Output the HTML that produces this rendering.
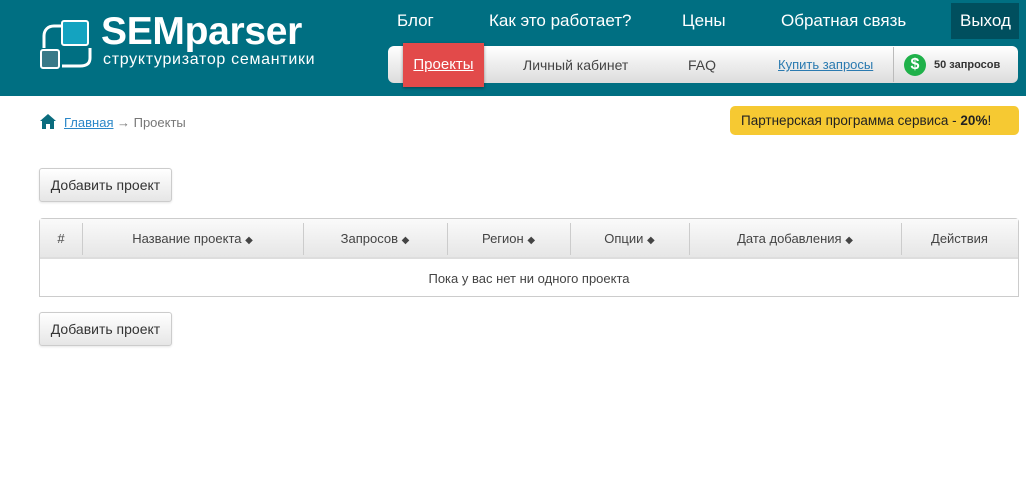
<!DOCTYPE html>
<html><head><meta charset="utf-8"><style>
*{margin:0;padding:0;box-sizing:border-box}
body{width:1026px;height:481px;background:#fff;font-family:"Liberation Sans","DejaVu Sans",sans-serif;position:relative;overflow:hidden;color:#333}
.hdr{position:absolute;left:0;top:0;width:1026px;height:96px;background:#006f82}
.a{position:absolute;white-space:nowrap}
.top{color:#fff;font-size:17px;top:11px}
.bar{position:absolute;left:388px;top:46px;width:630px;height:37px;border-radius:6px;background:linear-gradient(#fff,#dcdcdc)}
.red{position:absolute;left:403px;top:43px;width:81px;height:44px;background:#e24a4a;box-shadow:0 1px 3px rgba(0,0,0,.4);color:#fff;font-size:15px;text-decoration:underline;text-align:center;line-height:44px}
.btn{position:absolute;left:39px;width:133px;height:34px;border:1px solid #ccc;border-radius:3px;background:linear-gradient(#fff,#e6e6e6);font-size:14px;text-align:center;line-height:32px;color:#333;box-shadow:0 1px 2px rgba(0,0,0,.1)}
.tbl{position:absolute;left:39px;top:218px;width:980px;height:79px;border:1px solid #ccc;border-radius:4px 4px 0 0}
.th{position:absolute;top:0;height:40px;background:linear-gradient(#fafafa,#e6e6e6);border-bottom:2px solid #ddd;font-size:13px;color:#444;text-align:center;line-height:40px}
.th small{font-size:10px}
.sep{position:absolute;top:4px;width:1px;height:32px;background:#ccc}
</style></head><body>
<div class="hdr"></div>
<svg class="a" style="left:38px;top:18px" width="62" height="56" viewBox="0 0 62 56">
<path d="M26 8 H16 C10 8 6 12 6 18 V30" stroke="#fff" stroke-width="3" fill="none"/>
<path d="M52 30 V40 C52 46 48 48 42 48 H24" stroke="#fff" stroke-width="3" fill="none"/>
<rect x="24" y="3" width="26" height="24" rx="2" fill="#14a3c0" stroke="#fff" stroke-width="2"/>
<rect x="3" y="32" width="18" height="18" rx="2" fill="#3a7a88" stroke="#fff" stroke-width="2"/>
</svg>
<div class="a" style="left:101px;top:10px;color:#fff;font-size:39px;font-weight:bold;letter-spacing:-0.3px">SEMparser</div>
<div class="a" style="left:103px;top:51px;color:#fff;font-size:16px;letter-spacing:0.7px">структуризатор семантики</div>
<div class="a top" style="left:397px">Блог</div>
<div class="a top" style="left:489px">Как это работает?</div>
<div class="a top" style="left:682px">Цены</div>
<div class="a top" style="left:781px">Обратная связь</div>
<div class="a" style="left:951px;top:3px;width:68px;height:36px;background:#004f5e"></div>
<div class="a top" style="left:960px">Выход</div>
<div class="bar"></div>
<div class="red">Проекты</div>
<div class="a" style="left:523px;top:57px;font-size:14px;color:#444">Личный кабинет</div>
<div class="a" style="left:688px;top:57px;font-size:14px;color:#444">FAQ</div>
<div class="a" style="left:778px;top:57px;font-size:13px;color:#2a7ab0;text-decoration:underline">Купить запросы</div>
<div class="a" style="left:893px;top:47px;width:1px;height:35px;background:#bbb"></div>
<div class="a" style="left:904px;top:54px;width:22px;height:22px;border-radius:50%;background:#1fb14a;color:#fff;font-weight:bold;font-size:16px;text-align:center;line-height:22px">$</div>
<div class="a" style="left:934px;top:59px;font-size:11px;font-weight:bold;color:#333">50 запросов</div>
<svg class="a" style="left:39px;top:113px" width="18" height="17" viewBox="0 0 18 17"><path d="M9 1 L1 8 L3 8 L3 16 L7 16 L7 11 L11 11 L11 16 L15 16 L15 8 L17 8 Z" fill="#0b6c7e"/></svg>
<div class="a" style="left:64px;top:115px;font-size:13px;color:#2a87c8;text-decoration:underline">Главная</div>
<div class="a" style="left:117px;top:115px;font-size:13px;color:#777">→ Проекты</div>
<div class="a" style="left:730px;top:106px;width:289px;height:29px;background:#f6c932;border-radius:5px;font-size:13.5px;line-height:29px;padding-left:11px;color:#222">Партнерская программа сервиса - <b>20%</b>!</div>
<div class="btn" style="top:168px">Добавить проект</div>
<div class="tbl">
<div class="th" style="left:0;width:978px"></div>
<div class="th" style="left:0;width:42px;background:none;border:0">#</div>
<div class="th" style="left:42px;width:221px;background:none;border:0">Название проекта <small>◆</small></div>
<div class="th" style="left:263px;width:144px;background:none;border:0">Запросов <small>◆</small></div>
<div class="th" style="left:407px;width:123px;background:none;border:0">Регион <small>◆</small></div>
<div class="th" style="left:530px;width:119px;background:none;border:0">Опции <small>◆</small></div>
<div class="th" style="left:649px;width:212px;background:none;border:0">Дата добавления <small>◆</small></div>
<div class="th" style="left:861px;width:117px;background:none;border:0">Действия</div>
<div class="sep" style="left:42px"></div><div class="sep" style="left:263px"></div><div class="sep" style="left:407px"></div><div class="sep" style="left:530px"></div><div class="sep" style="left:649px"></div><div class="sep" style="left:861px"></div>
<div class="a" style="left:0;top:42px;width:978px;text-align:center;font-size:13px;line-height:36px;color:#444">Пока у вас нет ни одного проекта</div>
</div>
<div class="btn" style="top:312px">Добавить проект</div>
</body></html>
